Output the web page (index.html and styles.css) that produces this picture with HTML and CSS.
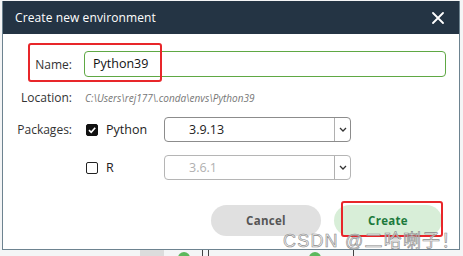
FILE: index.html
```html
<!DOCTYPE html>
<html lang="en">
<head>
    <meta charset="UTF-8">
    <title>Create new environment</title>
    <link rel="stylesheet" href="styles.css">
</head>
<body>
    <div class="dialog">
        <div class="header">
            <span class="title">Create new environment</span>
            <svg class="close" width="12" height="12" viewBox="0 0 12 12">
                <path d="M1 1L11 11M11 1L1 11" stroke="#fff" stroke-width="1.8" stroke-linecap="round"/>
            </svg>
        </div>

        <div class="form">
            <label class="label row-name">Name:</label>
            <div class="name-input row-name">Python39</div>

            <label class="label row-loc">Location:</label>
            <div class="location row-loc">C:\Users\rej177\.conda\envs\Python39</div>

            <label class="label row-py">Packages:</label>
            <div class="pkg row-py">
                <span class="check checked">
                    <svg width="10" height="10" viewBox="0 0 10 10">
                        <path d="M2 5.2L4.2 7.3L8.2 2.8" stroke="#fff" stroke-width="1.7" fill="none"/>
                    </svg>
                </span>
                <span class="pkg-name">Python</span>
                <div class="select">
                    <span class="select-value">3.9.13</span>
                    <span class="select-arrow">
                        <svg width="8" height="5" viewBox="0 0 8 5"><path d="M1 1L4 4L7 1" stroke="#333" stroke-width="1.3" fill="none"/></svg>
                    </span>
                </div>
            </div>

            <div class="pkg row-r">
                <span class="check"></span>
                <span class="pkg-name">R</span>
                <div class="select disabled">
                    <span class="select-value">3.6.1</span>
                    <span class="select-arrow">
                        <svg width="8" height="5" viewBox="0 0 8 5"><path d="M1 1L4 4L7 1" stroke="#333" stroke-width="1.3" fill="none"/></svg>
                    </span>
                </div>
            </div>
        </div>

        <div class="buttons">
            <button class="btn cancel">Cancel</button>
            <button class="btn create">Create</button>
        </div>
    </div>

    <div class="under">
        <span class="blob gray"></span>
        <span class="dot"></span>
        <span class="line l1"></span>
        <span class="line l2"></span>
        <span class="dot d2"></span>
        <span class="line l3"></span>
    </div>

    <!-- annotations drawn over the screenshot -->
    <div class="mark mark-name"></div>
    <div class="mark mark-create"></div>
    <div class="watermark">CSDN @二哈喇子！</div>
</body>
</html>
```

FILE: styles.css
```css
body {
    margin: 0;
    width: 463px;
    height: 256px;
    overflow: hidden;
    position: relative;
    background-color: #f4f5f6;
    font-family: "Open Sans", "Noto Sans", sans-serif;
    color: #222;
}
.dialog {
    margin: 1px 0 0 2px;
    width: 458px;
    height: 249px;
    box-sizing: border-box;
    border: 1px solid #6d8390;
    border-top: none;
    background-color: #fff;
    display: flex;
    flex-direction: column;
}
.header {
    height: 33px;
    flex-shrink: 0;
    background-color: #243444;
    color: #fff;
    display: flex;
    align-items: center;
    justify-content: space-between;
    padding: 0 15px 0 12px;
}
.title {
    font-size: 12px;
    letter-spacing: 0.1px;
}
.form {
    display: grid;
    grid-template-columns: 69px 1fr;
    column-gap: 12px;
    padding: 17px 13px 0 0;
}
.label {
    text-align: right;
    font-size: 12px;
    color: #333;
    align-self: center;
}
.row-name { grid-row: 1; }
.row-loc { grid-row: 2; margin-top: 10px; height: 22px; }
.row-py { grid-row: 3; margin-top: 8px; }
.row-r { grid-row: 4; grid-column: 2; margin-top: 13px; }
.label.row-loc { line-height: 22px; }
.name-input {
    height: 26px;
    box-sizing: border-box;
    border: 1px solid #5fa844;
    border-radius: 4px;
    padding-left: 8px;
    font-size: 12.5px;
    line-height: 24px;
    color: #111;
}
.location {
    font-size: 10px;
    font-style: italic;
    color: #777;
    line-height: 22px;
    padding-left: 1px;
}
.pkg {
    display: flex;
    align-items: center;
    padding-left: 2px;
}
.check {
    width: 12px;
    height: 12px;
    box-sizing: border-box;
    border: 1.5px solid #222;
    border-radius: 2px;
    display: flex;
    align-items: center;
    justify-content: center;
}
.check.checked {
    background-color: #111;
    border-color: #111;
}
.pkg-name {
    width: 58px;
    padding-left: 8px;
    font-size: 12.5px;
    color: #222;
}
.select {
    width: 187px;
    height: 25px;
    box-sizing: border-box;
    border: 1px solid #8c8c8c;
    border-radius: 4px;
    display: flex;
    align-items: center;
}
.select.disabled {
    border-color: #b5b5b5;
}
.select-value {
    flex: 1;
    padding-left: 24px;
    font-size: 12.5px;
    color: #222;
}
.select.disabled .select-value {
    color: #b0b0b0;
}
.select-arrow {
    width: 15px;
    height: 100%;
    border-left: 1px solid #b0b0b0;
    display: flex;
    align-items: center;
    justify-content: center;
}
.buttons {
    display: flex;
    justify-content: flex-end;
    gap: 13px;
    padding: 25px 17px 0 0;
}
.btn {
    height: 31px;
    border: none;
    border-radius: 16px;
    font-family: "Open Sans", "Noto Sans", sans-serif;
    font-size: 11.5px;
    font-weight: bold;
    letter-spacing: 0.3px;
}
.cancel {
    width: 110px;
    background-color: #e0e0e0;
    color: #555;
}
.create {
    width: 108px;
    background-color: #d8eed8;
    color: #1d7a3c;
}
.under {
    display: flex;
    align-items: flex-start;
    height: 6px;
    padding-left: 140px;
}
.blob.gray {
    width: 24px;
    height: 6px;
    background-color: #dcdcdc;
}
.dot {
    width: 12px;
    height: 12px;
    margin: 2px 0 0 14px;
    border-radius: 50%;
    background-color: #5cb85c;
}
.dot.d2 { margin-left: 100px; }
.line {
    width: 1px;
    height: 6px;
    background-color: #444;
    margin-left: 12px;
}
.line.l2 { margin-left: 5px; }
.line.l3 { margin-left: 32px; }
.mark {
    position: absolute;
    border: 2.5px solid #e8262a;
    border-radius: 3px;
    box-sizing: border-box;
}
.mark-name {
    left: 28px;
    top: 43px;
    width: 134px;
    height: 39px;
}
.mark-create {
    left: 341px;
    top: 201px;
    width: 102px;
    height: 36px;
}
.watermark {
    position: absolute;
    left: 283px;
    top: 226px;
    font-family: "Liberation Sans", "Noto Sans CJK SC", sans-serif;
    font-size: 18px;
    color: rgba(235, 235, 235, 0.75);
    -webkit-text-stroke: 0.6px #8a8a8a;
    letter-spacing: 1.2px;
}
```
